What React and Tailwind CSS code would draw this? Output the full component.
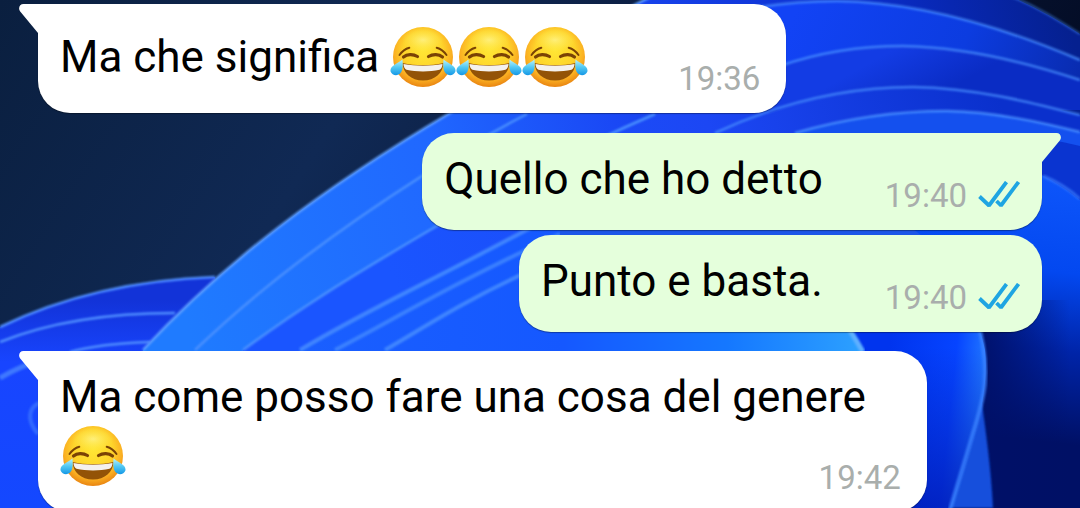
import clsx from 'clsx';

const messages = [
  { id: 1, mine: false, first: true, lines: [{ text: 'Ma che significa ', emojis: 3 }], time: '19:36' },
  { id: 2, mine: true, first: true, lines: [{ text: 'Quello che ho detto' }], time: '19:40' },
  { id: 3, mine: true, first: false, lines: [{ text: 'Punto e basta.' }], time: '19:40' },
  { id: 4, mine: false, first: true, lines: [{ text: 'Ma come posso fare una cosa del genere' }, { emojis: 1 }], time: '19:42' },
];

function JoyEmoji() {
  return (
    <svg viewBox="0 0 66 64" role="img" aria-label="😂" className="inline-block h-[64px] w-[66px] align-[-16px]">
      <circle cx="33" cy="33" r="30" fill="url(#joy-face)" />
      <ellipse cx="33" cy="16" rx="21" ry="12" fill="url(#joy-shine)" />
      <g fill="none" stroke="#7a4305" strokeLinecap="round">
        <path d="M9.500 31C12 27.500 15 25 19.300 23.800M56.500 31C54 27.500 51 25 46.700 23.800" strokeWidth="2" />
        <path d="M13.500 33C17 30 23 29.800 27.500 32.500M38.500 32.500C43 29.800 49 30 52.500 33" strokeWidth="3.200" />
      </g>
      <path d="M12.500 39C25 42 41 42 53.500 39C53 49 45 56.500 33 56.500C21 56.500 13 49 12.500 39Z" fill="#935307" />
      <path d="M13.500 40C26 42.300 40 42.300 52.500 40C52.500 43 51 45 49.500 45.800C40 48 26 48 16.500 45.800C15 45 13.500 43 13.500 40Z" fill="#f4f1ee" />
      <path d="M12.500 35.500C13 42 12.800 46 10.500 49C7.500 52.500 2 51.500 0.600 47.500C-0.500 42 7 40 12.500 35.500Z" fill="url(#joy-tear)" />
      <path d="M53.500 35.500C53 42 53.200 46 55.500 49C58.500 52.500 64 51.500 65.400 47.500C66.500 42 59 40 53.500 35.500Z" fill="url(#joy-tear)" />
    </svg>
  );
}

// Gradients shared by every emoji on the page
function EmojiDefs() {
  return (
    <svg width="0" height="0" className="absolute" aria-hidden="true">
      <defs>
        <radialGradient id="joy-face" cx="0.5" cy="0.4" r="0.6">
          <stop offset="0" stopColor="#ffe634" />
          <stop offset="0.55" stopColor="#fed42b" />
          <stop offset="0.8" stopColor="#fbb022" />
          <stop offset="1" stopColor="#e98512" />
        </radialGradient>
        <radialGradient id="joy-shine">
          <stop offset="0" stopColor="#fff79a" stopOpacity="0.7" />
          <stop offset="1" stopColor="#fff25a" stopOpacity="0" />
        </radialGradient>
        <linearGradient id="joy-tear" x1="0" y1="0" x2="0" y2="1">
          <stop offset="0" stopColor="#b9f2fb" />
          <stop offset="0.5" stopColor="#52c8f3" />
          <stop offset="1" stopColor="#1598e6" />
        </linearGradient>
      </defs>
    </svg>
  );
}

function ReadTicks() {
  return (
    <svg
      viewBox="0 0 42 30"
      role="img"
      aria-label="Letto"
      className="h-[30px] w-[42px]"
      fill="none"
      stroke="#1fa5e2"
      strokeWidth="3.8"
      strokeLinejoin="bevel"
    >
      <path d="M1.500 15.500L11 24.500L28.500 1" />
      <path d="M18.500 20L23 24.500L40.500 1" />
    </svg>
  );
}

function Tail({ mine }) {
  return (
    <svg
      viewBox="0 0 20 31"
      aria-hidden="true"
      className={clsx('absolute top-0 h-[31px] w-[20px]', mine ? '-right-[19px] -scale-x-100 text-[#e5ffdc]' : '-left-[19px] text-white')}
    >
      <path d="M20 0H4.500C0.500 0 -1.200 4.500 1.200 7.500L19 29L20 31Z" fill="currentColor" />
    </svg>
  );
}

function Bubble({ message }) {
  const { mine, first, lines, time } = message;
  const last = lines.length - 1;

  return (
    <li
      className={clsx(
        'relative w-fit max-w-full rounded-[32px] pt-5 pb-[14px] pl-[22px] shadow-[0_1px_1px_rgba(0,0,0,0.35)]',
        mine ? 'self-end bg-[#e5ffdc] pr-[22px]' : 'self-start bg-white pr-[26px]',
        first && (mine ? 'rounded-tr-none' : 'rounded-tl-none'),
        first && (mine ? 'mt-5' : 'mt-[19px] first:mt-0'),
        !first && 'mt-[5px]',
      )}
    >
      {first && <Tail mine={mine} />}
      {lines.slice(0, last).map((line) => (
        <p key={line.text} className="pr-[35px]">{line.text}</p>
      ))}
      <div className={clsx('flex items-end justify-between', mine ? 'gap-[62px]' : 'gap-[90px]')}>
        <p className="pb-[11px] whitespace-pre-wrap">
          {lines[last].text}
          {Array.from({ length: lines[last].emojis || 0 }, (_, i) => <JoyEmoji key={i} />)}
        </p>
        <div className="flex items-center gap-[11px] text-[33px] leading-[40px] text-[#a9aeac]">
          <time>{time}</time>
          {mine && <ReadTicks />}
        </div>
      </div>
    </li>
  );
}

function Wallpaper() {
  return (
    <svg viewBox="0 0 1080 508" preserveAspectRatio="xMidYMid slice" aria-hidden="true" className="absolute inset-0 -z-10 h-full w-full">
      <defs>
        <linearGradient id="night" x1="0" y1="0" x2="1" y2="0.3">
          <stop offset="0" stopColor="#0a1f3f" />
          <stop offset="0.35" stopColor="#102954" />
          <stop offset="0.7" stopColor="#0a1838" />
          <stop offset="1" stopColor="#020a22" />
        </linearGradient>
        <linearGradient id="petal" gradientUnits="userSpaceOnUse" x1="180" y1="300" x2="1080" y2="60">
          <stop offset="0" stopColor="#1f7bff" />
          <stop offset="0.3" stopColor="#2068ff" />
          <stop offset="0.5" stopColor="#1a48f5" />
          <stop offset="0.8" stopColor="#0a2cc8" />
          <stop offset="1" stopColor="#05208f" />
        </linearGradient>
        <linearGradient id="band" gradientUnits="userSpaceOnUse" x1="800" y1="0" x2="1080" y2="120">
          <stop offset="0" stopColor="#1243f5" />
          <stop offset="0.55" stopColor="#0c3ce0" />
          <stop offset="1" stopColor="#0829a8" />
        </linearGradient>
        <linearGradient id="band-mid" gradientUnits="userSpaceOnUse" x1="900" y1="46" x2="930" y2="100">
          <stop offset="0" stopColor="#133ce4" />
          <stop offset="1" stopColor="#0a2cc4" />
        </linearGradient>
        <linearGradient id="band-low" gradientUnits="userSpaceOnUse" x1="400" y1="300" x2="1000" y2="100">
          <stop offset="0" stopColor="#1a55ff" />
          <stop offset="0.55" stopColor="#1c47f4" />
          <stop offset="1" stopColor="#0a30cc" />
        </linearGradient>
        <linearGradient id="front" gradientUnits="userSpaceOnUse" x1="200" y1="340" x2="860" y2="340">
          <stop offset="0" stopColor="#1c62ff" />
          <stop offset="0.55" stopColor="#1558ff" />
          <stop offset="0.8" stopColor="#1578ff" />
          <stop offset="1" stopColor="#2ca0ff" />
        </linearGradient>
        <linearGradient id="right" gradientUnits="userSpaceOnUse" x1="1060" y1="180" x2="1030" y2="440">
          <stop offset="0" stopColor="#0d55fa" />
          <stop offset="0.35" stopColor="#0348f0" />
          <stop offset="0.65" stopColor="#0024a8" />
          <stop offset="1" stopColor="#001065" />
        </linearGradient>
        <linearGradient id="dusk" gradientUnits="userSpaceOnUse" x1="985" y1="0" x2="1070" y2="0">
          <stop offset="0" stopColor="#001068" stopOpacity="0.9" />
          <stop offset="1" stopColor="#001068" stopOpacity="0" />
        </linearGradient>
        <linearGradient id="core" gradientUnits="userSpaceOnUse" x1="890" y1="340" x2="985" y2="350">
          <stop offset="0" stopColor="#0034ee" />
          <stop offset="0.7" stopColor="#0644ff" />
          <stop offset="1" stopColor="#1f74ff" />
        </linearGradient>
        <linearGradient id="core-shade" x1="0" y1="0" x2="0" y2="1">
          <stop offset="0.4" stopColor="#0018b0" stopOpacity="0" />
          <stop offset="1" stopColor="#0018b0" stopOpacity="0.75" />
        </linearGradient>
        <linearGradient id="small" gradientUnits="userSpaceOnUse" x1="0" y1="300" x2="0" y2="508">
          <stop offset="0" stopColor="#1233d8" />
          <stop offset="0.3" stopColor="#1845ff" />
          <stop offset="1" stopColor="#1448ff" />
        </linearGradient>
        <filter id="soft" x="-5%" y="-5%" width="110%" height="110%">
          <feGaussianBlur stdDeviation="1" />
        </filter>
      </defs>

      <rect width="1080" height="508" fill="url(#night)" />

      {/* small petal on the left */}
      <path d="M0 327C60 298 130 280 215 277L260 508H0Z" fill="url(#small)" />
      <g fill="none" stroke="#4f8dff" strokeWidth="2.500" filter="url(#soft)">
        <path d="M0 327C60 298 130 280 215 277" />
        <path d="M0 342C50 322 110 313 175 313" />
        <path d="M70 352C95 345 120 343 150 342" />
        <path d="M0 378C12 371 24 365 36 362" strokeOpacity="0.7" strokeWidth="5" />
        <path d="M42 402C28 406 26 420 38 434" strokeOpacity="0.5" strokeWidth="4" />
      </g>

      {/* big bloom, from the outer petal inwards */}
      <path d="M143 350C225 262 320 190 450 113C530 62 600 22 660 -8H1000C1030 4 1055 18 1080 34V508H120Z" fill="url(#petal)" />
      <path d="M640 40C700 15 770 1 837 1C920 2 1005 28 1080 60V110H640Z" fill="url(#band)" />
      <path d="M740 80C790 60 850 46 903 46C965 47 1025 62 1080 80V110H740Z" fill="url(#band-mid)" />
      <path d="M243 350C300 308 350 277 430 230C490 195 560 155 655 114L700 90L770 113C820 96 865 87 913 87C975 88 1030 102 1080 115V400H243Z" fill="url(#band-low)" />
      <path d="M795 133C840 120 890 111 947 111C995 112 1040 122 1080 132V150H795Z" fill="#1450ee" />
      <path d="M300 350C380 306 440 270 530 230H1080V508H250Z" fill="url(#front)" />
      <g fill="none" stroke="#4a90ff" strokeWidth="2.500" filter="url(#soft)">
        <path d="M143 350C225 262 320 190 450 113C530 62 600 22 660 -8" stroke="#5f9fff" />
        <path d="M195 350C270 278 350 222 422 176C455 154 490 133 527 114" />
        <path d="M243 350C300 308 350 277 430 230C490 195 560 155 655 114" />
        <path d="M300 350C370 308 430 282 530 228" strokeWidth="4" strokeOpacity="0.8" />
        <path d="M335 350C400 316 450 285 560 234" strokeWidth="4" strokeOpacity="0.7" />
        <path d="M385 350C420 330 460 303 525 273" strokeWidth="4" strokeOpacity="0.8" />
        <path d="M715 133C760 112 830 87 913 87C975 88 1030 102 1080 115" strokeOpacity="0.75" />
        <path d="M640 40C700 15 770 1 837 1C920 2 1005 28 1080 60" strokeOpacity="0.75" />
        <path d="M780 66C820 52 860 46 903 46C965 47 1025 62 1080 80" strokeOpacity="0.75" />
        <path d="M795 133C840 120 890 111 947 111C995 112 1040 122 1080 132" strokeOpacity="0.85" />
        <path d="M1010 -4C1036 6 1058 20 1080 34" strokeOpacity="0.45" />
      </g>

      {/* folds on the right-hand side */}
      <path d="M1000 134C1030 136 1055 140 1080 146V508H930V230Z" fill="#0a34d0" />
      <path d="M1000 160C1035 168 1060 184 1080 200V508H900V230Z" fill="url(#right)" />
      <path d="M980 300H1080V508H980Z" fill="url(#dusk)" />
      <path d="M1043 176C1058 182 1070 190 1080 199" fill="none" stroke="#3a7dff" strokeOpacity="0.7" strokeWidth="3" filter="url(#soft)" />
      <path d="M980 392C986 430 991 470 993 508H940Z" fill="#1450dc" filter="url(#soft)" />
      <path d="M907 240C945 255 975 300 985 350C990 400 970 450 950 508H862V350L845 320V240Z" fill="url(#core)" />
      <path d="M907 240C945 255 975 300 985 350C990 400 970 450 950 508H862V350L845 320V240Z" fill="url(#core-shade)" />
      <path d="M980 330C990 375 985 395 973 433C966 458 958 482 950 510" fill="none" stroke="#3c83ff" strokeOpacity="0.8" strokeWidth="4" filter="url(#soft)" />
      <path d="M600 240H780C815 265 840 310 862 352H600Z" fill="url(#front)" />
      <path d="M838 312C847 325 855 338 863 352" fill="none" stroke="#5fb0ff" strokeWidth="5" filter="url(#soft)" />
      <path d="M560 228H912L922 236H560Z" fill="#1c56e8" />
    </svg>
  );
}

export default function App() {
  return (
    <main className="relative isolate h-screen overflow-hidden bg-[#0b1f3f] font-[Roboto,sans-serif] text-[44px] leading-[52px] text-black">
      <Wallpaper />
      <EmojiDefs />
      <ul className="flex flex-col px-[38px] pt-1">
        {messages.map((message) => (
          <Bubble key={message.id} message={message} />
        ))}
      </ul>
    </main>
  );
}
